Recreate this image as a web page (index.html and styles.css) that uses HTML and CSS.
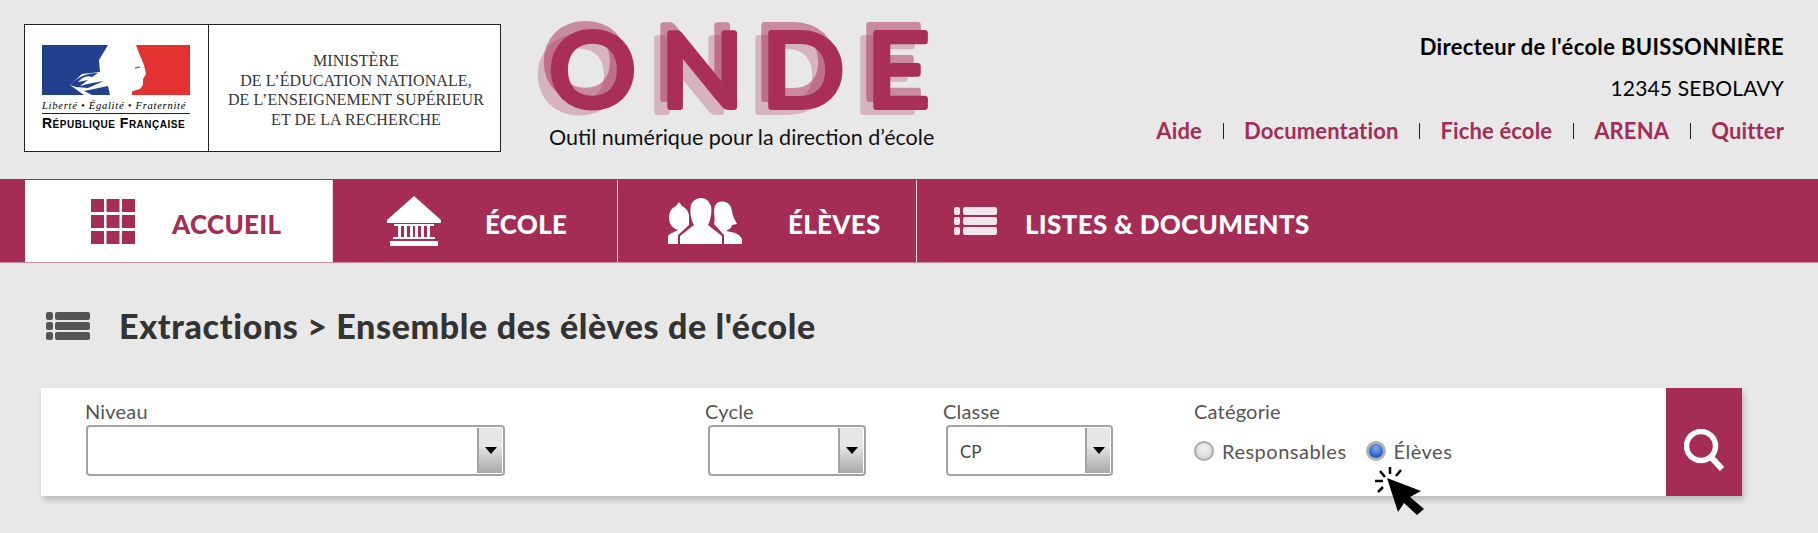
FILE: index.html
```html
<!DOCTYPE html>
<html lang="fr">
<head>
    <meta charset="UTF-8">
    <title>ONDE - Extractions</title>
    <link rel="stylesheet" href="styles.css">
</head>
<body>
    <!-- Header -->
    <header class="site-header">
        <div class="ministry">
            <div class="ministry-rf">
                <svg class="rf-flag" viewBox="0 0 148 50" width="148" height="50">
                    <rect width="70" height="50" fill="#21408e"/>
                    <rect x="90" width="58" height="50" fill="#e33231"/>
                    <path fill="#fff" d="M66 0 L94 0 L97 8 L102 20 L104 29 L101 34 L101 40 L98 44 L91 46 L84 50 L66 50 L42 50 L28 40 L40 29 L58 27 L57 15 Z"/>
                    <path fill="#21408e" d="M28 40 C36 32 44 28 56 28 L50 32 C44 30 40 33 36 37 L46 35 L38 41 L50 38 L62 36 L46 43 L34 42 Z M42 46 L66 41 L68 50 L50 50 Z"/>
                    <path stroke="#777" stroke-width="1.4" d="M93 23 L98 22"/>
                </svg>
                <div class="rf-motto">Liberté • Égalité • Fraternité</div>
                <div class="rf-name">République Française</div>
            </div>
            <div class="ministry-name">
                MINISTÈRE<br>
                DE L’ÉDUCATION NATIONALE,<br>
                DE L’ENSEIGNEMENT SUPÉRIEUR<br>
                ET DE LA RECHERCHE
            </div>
        </div>

        <div class="brand">
            <svg class="brand-logo" viewBox="0 0 420 108" width="420" height="108">
                <defs>
                    <text id="onde-word" transform="scale(1.06 1)" y="90" x="17.800 123.200 218.500 317.500">ONDE</text>
                </defs>
                <use href="#onde-word" x="-13" y="5" class="logo-ghost-light"/>
                <use href="#onde-word" x="-7" y="-8" class="logo-ghost-dark"/>
                <use href="#onde-word" class="logo-main"/>
            </svg>
            <div class="brand-sub">Outil numérique pour la direction d’école</div>
        </div>

        <div class="user-box">
            <div class="user-name">Directeur de l'école BUISSONNIÈRE</div>
            <div class="user-city">12345 SEBOLAVY</div>
            <nav class="user-links">
                <a href="#">Aide</a>
                <a href="#">Documentation</a>
                <a href="#">Fiche école</a>
                <a href="#">ARENA</a>
                <a href="#">Quitter</a>
            </nav>
        </div>
    </header>

    <!-- Main navigation -->
    <nav class="main-nav">
        <a class="tab tab-home active" href="#">
            <svg class="tab-icon" viewBox="0 0 44 45" width="44" height="45" fill="#a52c55">
                <rect width="13" height="13"/><rect x="15.500" width="13" height="13"/><rect x="31" width="13" height="13"/>
                <rect y="16" width="13" height="13"/><rect x="15.500" y="16" width="13" height="13"/><rect x="31" y="16" width="13" height="13"/>
                <rect y="32" width="13" height="13"/><rect x="15.500" y="32" width="13" height="13"/><rect x="31" y="32" width="13" height="13"/>
            </svg>
            <span class="tab-label">ACCUEIL</span>
        </a>
        <a class="tab tab-school" href="#">
            <svg class="tab-icon" viewBox="0 0 54 50" width="54" height="50" fill="#fff">
                <path d="M27 0 L54 24 L54 27 L0 27 L0 24 Z"/>
                <rect x="7" y="28" width="40" height="2"/>
                <rect x="11" y="30" width="3" height="11"/><rect x="17" y="30" width="3" height="11"/><rect x="23" y="30" width="3" height="11"/>
                <rect x="28" y="30" width="3" height="11"/><rect x="34" y="30" width="3" height="11"/><rect x="40" y="30" width="3" height="11"/>
                <rect x="6" y="41" width="42" height="2"/>
                <rect x="3" y="45" width="48" height="5"/>
            </svg>
            <span class="tab-label">ÉCOLE</span>
        </a>
        <a class="tab tab-pupils" href="#">
            <svg class="tab-icon" viewBox="0 0 74 46" width="74" height="46" fill="#fff">
                <path d="M0 46 L0 38 C2 35 7 34 10 32 C4 30 1 26 1 19 C1 12 6 9 8 8 L11 4 L14 8 C18 10 21 14 21 18 L21 27 L10 37 L10 46 Z"/>
                <path d="M12 46 L12 38 L26 27 C22 20 22 12 23 7 C25 2 29 0 33 0 C38 0 41 3 43 8 C44 13 43 21 40 27 L54 38 L54 46 Z"/>
                <path d="M46 26 C48 20 44 12 48 6 C52 2 60 3 63 9 C64 12 64 16 66 20 L69 26 L64 27 L63 30 L58 33 C62 34 71 34 74 41 L74 46 L56 46 L56 37 Z"/>
            </svg>
            <span class="tab-label">ÉLÈVES</span>
        </a>
        <a class="tab tab-lists" href="#">
            <svg class="tab-icon" viewBox="0 0 43 28" width="43" height="28" fill="#f1e6ec">
                <rect y="0" width="6" height="8" rx="2"/><rect x="9" y="0" width="34" height="8" rx="2"/>
                <rect y="10" width="6" height="8" rx="2"/><rect x="9" y="10" width="34" height="8" rx="2"/>
                <rect y="20" width="6" height="8" rx="2"/><rect x="9" y="20" width="34" height="8" rx="2"/>
            </svg>
            <span class="tab-label">LISTES &amp; DOCUMENTS</span>
        </a>
    </nav>

    <!-- Page content -->
    <main class="content">
        <div class="page-title">
            <svg class="title-icon" viewBox="0 0 44 28" width="44" height="28" fill="#555">
                <rect y="0" width="7" height="8" rx="2"/><rect x="9" y="0" width="35" height="8" rx="2"/>
                <rect y="10" width="7" height="8" rx="2"/><rect x="9" y="10" width="35" height="8" rx="2"/>
                <rect y="20" width="7" height="8" rx="2"/><rect x="9" y="20" width="35" height="8" rx="2"/>
            </svg>
            <h1>Extractions &gt; Ensemble des élèves de l'école</h1>
        </div>

        <form class="filter-card">
            <div class="field field-level">
                <label class="field-label">Niveau</label>
                <div class="select"><span class="select-value"></span><span class="select-btn"><i></i></span></div>
            </div>
            <div class="field field-cycle">
                <label class="field-label shifted">Cycle</label>
                <div class="select"><span class="select-value"></span><span class="select-btn"><i></i></span></div>
            </div>
            <div class="field field-class">
                <label class="field-label shifted">Classe</label>
                <div class="select"><span class="select-value">CP</span><span class="select-btn"><i></i></span></div>
            </div>
            <div class="field field-category">
                <label class="field-label">Catégorie</label>
                <div class="radios">
                    <span class="radio"></span><span class="radio-text">Responsables</span>
                    <span class="radio checked"></span><span class="radio-text">Élèves</span>
                </div>
            </div>
            <button class="search-btn" type="button">
                <svg viewBox="0 0 41 42" width="41" height="42" fill="none" stroke="#fff">
                    <circle cx="17" cy="17" r="14.500" stroke-width="5.500"/>
                    <path d="M27 28 L38 40" stroke-width="6"/>
                </svg>
            </button>

            <!-- Mouse pointer over the card -->
            <svg class="pointer" viewBox="0 0 52 50" width="52" height="50">
                <path d="M13 12 L47 25 L36 31 L50 43 L43 49 L30 37 L24 46 Z" fill="#000"/>
                <path d="M16 1 L16 8 M22 10 L27 4 M1 15 L9 15 M4 26 L9 21 M6 5 L11 11" stroke="#000" stroke-width="2.500" fill="none"/>
            </svg>
        </form>
    </main>
</body>
</html>
```

FILE: styles.css
```css
/* ONDE extraction page */

* {
    box-sizing: border-box;
}

body {
    margin: 0;
    background: #e8e8e9;
    font-family: "Lato", sans-serif;
    color: #000;
}

/* Header */
.site-header {
    display: flex;
    height: 179px;
    padding: 24px 34px 0 24px;
}

.ministry {
    display: flex;
    width: 477px;
    height: 128px;
    background: #fff;
    border: 1px solid #222;
}

.ministry-rf {
    width: 184px;
    padding: 20px 0 0 17px;
    border-right: 1px solid #222;
}

.rf-flag {
    display: block;
}

.rf-motto {
    width: 148px;
    margin-top: 5px;
    font-family: "Liberation Serif", serif;
    font-style: italic;
    font-size: 10.500px;
    letter-spacing: 0.750px;
    white-space: nowrap;
    padding-bottom: 2px;
    border-bottom: 1px solid #222;
}

.rf-name {
    font-family: "Liberation Sans", sans-serif;
    font-weight: bold;
    font-variant: small-caps;
    font-size: 14px;
    letter-spacing: 0.500px;
    line-height: 16px;
    margin-top: 1px;
    white-space: nowrap;
}

.ministry-name {
    flex: 1;
    padding: 26px 0 0 3px;
    text-align: center;
    font-family: "Liberation Serif", serif;
    font-size: 16px;
    letter-spacing: 0.100px;
    line-height: 19.700px;
    color: #333;
    white-space: nowrap;
}

.brand {
    width: 420px;
    margin: -7px 0 0 29px;
}

.brand-logo {
    display: block;
    font-family: "Lato", sans-serif;
    font-size: 103px;
    font-weight: 400;
    stroke-width: 6px;
    stroke-linejoin: round;
    fill: #a92e58;
    stroke: #a92e58;
}

.logo-ghost-dark {
    opacity: 0.5;
}

.logo-ghost-light {
    opacity: 0.28;
}

.brand-sub {
    margin-left: 19px;
    font-size: 21.500px;
    line-height: 24px;
    color: #111;
    white-space: nowrap;
}

.user-box {
    flex: 1;
    text-align: right;
    padding-top: 11px;
}

.user-name {
    font-size: 22px;
    font-weight: 700;
    letter-spacing: 0.330px;
    line-height: 24px;
}

.user-city {
    margin-top: 17px;
    font-size: 21px;
    letter-spacing: 0.150px;
    line-height: 24px;
}

.user-links {
    display: flex;
    justify-content: flex-end;
    margin-top: 19px;
    font-size: 22px;
    letter-spacing: 0.140px;
    line-height: 24px;
    font-weight: 700;
}

.user-links a {
    color: #a52c55;
    text-decoration: none;
}

.user-links a + a {
    margin-left: 21px;
    padding-left: 21px;
    background: linear-gradient(#222, #222) left center / 1px 16px no-repeat;
}

/* Main navigation */
.main-nav {
    display: flex;
    height: 84px;
    padding-left: 25px;
    background: #a52c55;
    border-top: 1px solid #8d3a58;
    border-bottom: 1px solid #d48ba5;
}

.tab {
    display: flex;
    align-items: center;
    color: #fff;
    font-size: 26px;
    font-weight: 900;
    letter-spacing: 0.300px;
    text-decoration: none;
    border-right: 1px solid #eed8e1;
    white-space: nowrap;
}

.tab-label {
    padding-top: 6px;
}

.tab.active {
    background: #fff;
    color: #a52c55;
}

.tab-home {
    width: 308px;
    padding-left: 66px;
    gap: 37px;
}

.tab-school {
    width: 285px;
    padding-left: 54px;
    gap: 44px;
}

.tab-pupils {
    width: 299px;
    padding-left: 50px;
    gap: 46px;
}

.tab-lists {
    padding-left: 37px;
    gap: 28px;
    border-right: none;
}

/* Content */
.content {
    padding: 0 76px 37px 41px;
}

.page-title {
    display: flex;
    align-items: center;
    height: 125px;
    padding-left: 5px;
    gap: 29px;
}

.page-title h1 {
    margin: 0;
    font-size: 34px;
    font-weight: 900;
    letter-spacing: 0.630px;
    color: #333;
    white-space: nowrap;
}

.filter-card {
    position: relative;
    display: flex;
    height: 108px;
    padding-left: 45px;
    background: #fff;
    box-shadow: 2px 4px 6px rgba(0, 0, 0, 0.2);
}

.field {
    padding-top: 12px;
}

.field-level {
    width: 419px;
}

.field-cycle {
    width: 158px;
    margin-left: 203px;
}

.field-class {
    width: 167px;
    margin-left: 80px;
}

.field-category {
    margin-left: 82px;
}

.field-label {
    display: block;
    height: 25px;
    font-size: 20px;
    letter-spacing: 0.200px;
    line-height: 22px;
    color: #555;
}

.field-level .field-label,
.field-category .field-label {
    margin-left: -1px;
}

.field-label.shifted {
    margin-left: -3px;
}

.select {
    display: flex;
    height: 51px;
    border: 2px solid #a3a3a3;
    border-radius: 4px;
}

.select-value {
    flex: 1;
    padding-left: 12px;
    font-size: 17px;
    line-height: 49px;
    color: #444;
}

.select-btn {
    display: flex;
    width: 25px;
    align-items: center;
    justify-content: center;
    margin: 1px 1px 1px 0;
    border-left: 2px solid #a3a3a3;
    background: linear-gradient(#e6e6e6 40%, #a8a8a8);
}

.select-btn i {
    width: 0;
    height: 0;
    border: 6px solid transparent;
    border-top: 7px solid #000;
    border-bottom: none;
}

.radios {
    display: flex;
    align-items: center;
    height: 24px;
    margin-top: 14px;
    margin-left: -1px;
    font-size: 20px;
    letter-spacing: 0.500px;
    color: #555;
}

.radio {
    width: 20px;
    height: 20px;
    border-radius: 50%;
    border: 2px solid #aaa;
    background: radial-gradient(circle at 50% 35%, #f4f4f4, #ccc);
}

.radio.checked {
    margin-left: 19px;
    border: 3px solid #b0b0b0;
    background: radial-gradient(circle at 50% 30%, #7fa8ee, #2a5ec8 70%);
}

.radio-text {
    margin-left: 8px;
}

.search-btn {
    display: flex;
    align-items: center;
    justify-content: center;
    width: 76px;
    margin-left: auto;
    padding: 16px 0 0 0;
    border: none;
    background: #a52c55;
}

.pointer {
    position: absolute;
    left: 1333px;
    top: 78px;
}
```
